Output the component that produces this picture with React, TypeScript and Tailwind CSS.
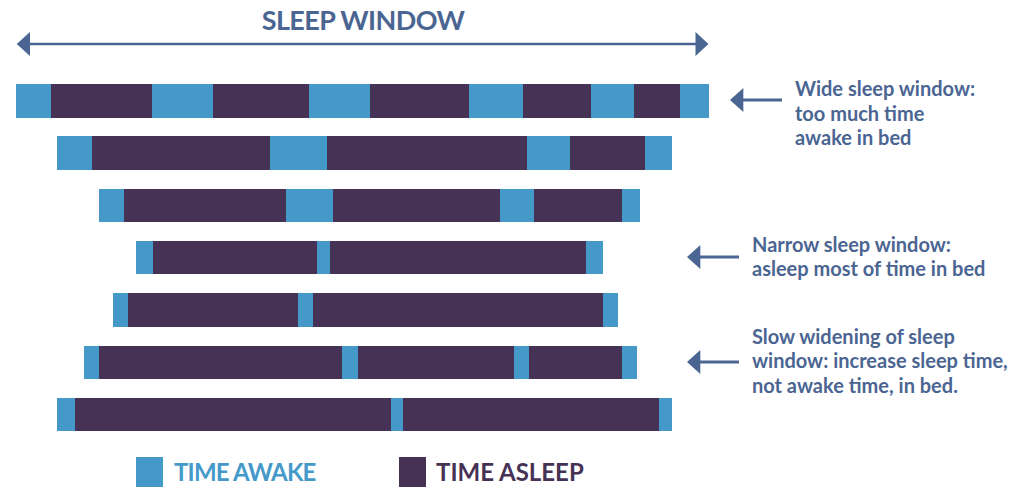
import React from "react";

const AWAKE = "#4499c9";
const ASLEEP = "#463255";

type Row = { bounds: number[]; note?: { lines: string[]; arrowX: number; textTop: number } };

const rows: Row[] = [
  {
    bounds: [16, 51, 152, 213, 309, 370, 469, 523, 591, 634, 680, 709],
    note: { lines: ["Wide sleep window:", "too much time", "awake in bed"], arrowX: 730, textTop: -8 },
  },
  { bounds: [57, 92, 270, 327, 527, 570, 645, 672] },
  { bounds: [99, 124, 286, 333, 500, 534, 622, 640] },
  {
    bounds: [136, 153, 317, 330, 586, 603],
    note: { lines: ["Narrow sleep window:", "asleep most of time in bed"], arrowX: 687, textTop: -9 },
  },
  { bounds: [113, 128, 298, 313, 603, 618] },
  {
    bounds: [84, 99, 342, 358, 514, 529, 622, 637],
    note: {
      lines: ["Slow widening of sleep", "window: increase sleep time,", "not awake time, in bed."],
      arrowX: 687,
      textTop: -22,
    },
  },
  { bounds: [57, 75, 391, 403, 659, 672] },
];

function Bar({ bounds }: { bounds: number[] }) {
  const segs = [];
  for (let i = 0; i < bounds.length - 1; i++) {
    segs.push(
      <div
        key={i}
        className="h-full shrink-0"
        style={{ width: bounds[i + 1] - bounds[i], backgroundColor: i % 2 === 0 ? AWAKE : ASLEEP }}
      />
    );
  }
  return (
    <div className="flex h-full shrink-0" style={{ marginLeft: bounds[0] }}>
      {segs}
    </div>
  );
}

function SmallArrow() {
  return (
    <svg width="52" height="24" viewBox="0 0 52 24" className="shrink-0">
      <polygon points="0,12 13.3,0 13.3,24" fill="#4b6592" />
      <line x1="12" y1="12" x2="52" y2="12" stroke="#4b6592" strokeWidth="3" />
    </svg>
  );
}

export default function App() {
  return (
    <div
      className="w-[1024px] h-[501px] bg-white overflow-hidden flex flex-col"
      style={{ fontFamily: "Lato, 'Open Sans', sans-serif" }}
    >
      <div className="w-[710px] pl-[16px] flex flex-col">
        <div className="pt-[7px] text-center text-[27px] leading-[25px] font-bold tracking-[-0.6px] text-[#4b6592]">
          SLEEP WINDOW
        </div>
        <svg width="694" height="24" viewBox="0 0 694 24" className="block">
          <polygon points="0.7,12 14,0 14,24" fill="#4b6592" />
          <line x1="13" y1="12" x2="681" y2="12" stroke="#4b6592" strokeWidth="2.5" />
          <polygon points="692.5,12 679.5,0 679.5,24" fill="#4b6592" />
        </svg>
      </div>

      <div className="mt-[28px] flex flex-col gap-[18.83px]">
        {rows.map((r, idx) => (
          <div key={idx} className="flex items-start h-[33.5px]">
            <div className="w-[687px] h-full shrink-0 flex">
              <Bar bounds={r.bounds} />
            </div>
            {r.note && (
              <div className="flex items-start shrink-0" style={{ marginLeft: r.note.arrowX - 687 }}>
                <div className="mt-[4px]">
                  <SmallArrow />
                </div>
                <div
                  className="ml-[13px] text-[20px] leading-[24.5px] font-bold text-[#4b6592] whitespace-nowrap"
                  style={{ marginTop: r.note.textTop }}
                >
                  {r.note.lines.map((l, i) => (
                    <div key={i}>{l}</div>
                  ))}
                </div>
              </div>
            )}
          </div>
        ))}
      </div>

      <div className="mt-[25.5px] flex items-center pl-[136px]">
        <div className="w-[263px] flex items-center gap-[11px]">
          <div className="w-[27px] h-[30px]" style={{ backgroundColor: AWAKE }} />
          <span className="text-[24px] leading-[30px] font-bold tracking-[-0.8px] text-[#4499c9]">TIME AWAKE</span>
        </div>
        <div className="flex items-center gap-[10px]">
          <div className="w-[27px] h-[30px]" style={{ backgroundColor: ASLEEP }} />
          <span className="text-[24px] leading-[30px] font-bold text-[#463255]">TIME ASLEEP</span>
        </div>
      </div>
    </div>
  );
}
